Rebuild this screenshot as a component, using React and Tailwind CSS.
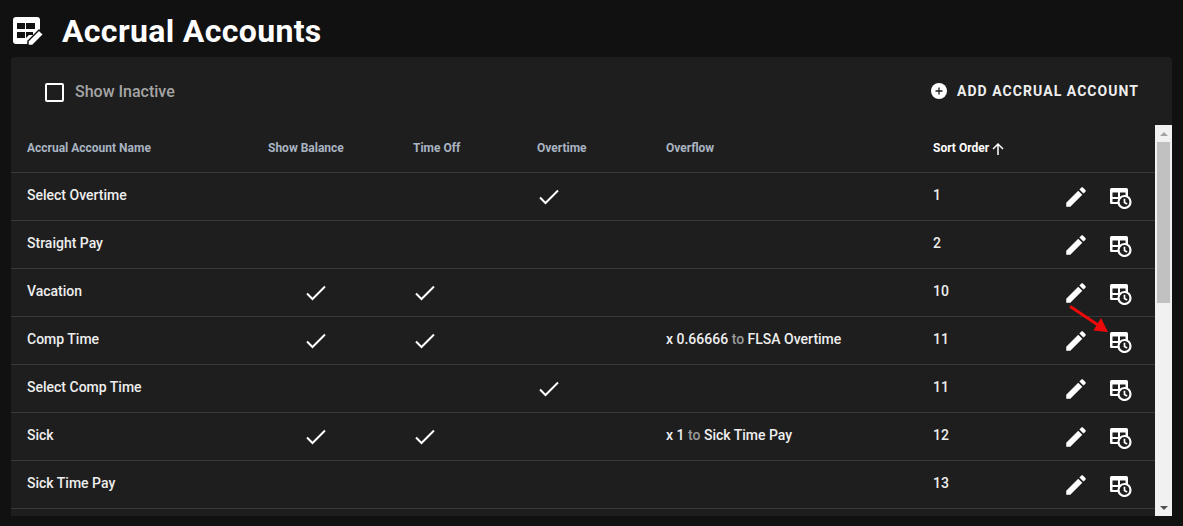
const ROWS = [
  { name: 'Select Overtime', overtime: true, sort: 1 },
  { name: 'Straight Pay', sort: 2 },
  { name: 'Vacation', balance: true, timeOff: true, sort: 10 },
  { name: 'Comp Time', balance: true, timeOff: true, rate: 'x 0.66666', target: 'FLSA Overtime', sort: 11 },
  { name: 'Select Comp Time', overtime: true, sort: 11 },
  { name: 'Sick', balance: true, timeOff: true, rate: 'x 1', target: 'Sick Time Pay', sort: 12 },
  { name: 'Sick Time Pay', sort: 13 },
];

const GRID = 'grid grid-cols-[257px_145px_124px_129px_267px_120px_1fr] items-center';

function Check() {
  return (
    <svg width="20" height="16" viewBox="0 0 20 16" fill="none" stroke="white" strokeWidth="2">
      <path d="M1 8.5l5.5 5.5L19 1.5" />
    </svg>
  );
}

function EditIcon() {
  return (
    <svg width="26" height="26" viewBox="0 0 24 24" fill="white">
      <path d="M3 17.25V21h3.75L17.81 9.94l-3.75-3.75L3 17.25zM20.71 7.04c.39-.39.39-1.02 0-1.41l-2.34-2.34c-.39-.39-1.02-.39-1.41 0l-1.83 1.83 3.75 3.75 1.83-1.83z" />
    </svg>
  );
}

function TableClock() {
  return (
    <svg width="22" height="21" viewBox="0 0 22 21">
      <rect x="0" y="0" width="18" height="16" rx="1.5" fill="white" />
      <path d="M2.5 4.5h5.5v4.5H2.5zM10 4.5h5.5v4.5H10zM2.5 11h5.5v3H2.5z" fill="#1e1e1e" />
      <circle cx="14.5" cy="14" r="6" fill="#1e1e1e" stroke="white" strokeWidth="2.2" />
      <path d="M14.5 10.8v3.6l2.6 1.5" fill="none" stroke="white" strokeWidth="1.7" />
    </svg>
  );
}

function TitleIcon() {
  return (
    <svg width="31" height="29" viewBox="0 0 31 29">
      <path d="M3 0h21a3 3 0 0 1 3 3v13L14 27H3a3 3 0 0 1-3-3V3a3 3 0 0 1 3-3z" fill="white" />
      <path d="M4 6h8v6H4zM13 6h9v6h-9zM4 15h8v6H4zM13 15h7v3h-4l-3 3z" fill="#111111" />
      <path d="M15 28.5v-4.5L26 13l4.5 4.5-11 11z" fill="white" stroke="#111111" strokeWidth="1.5" />
    </svg>
  );
}

export default function App() {
  return (
    <div className="h-[526px] w-[1183px] overflow-hidden bg-[#111111] font-['Roboto',sans-serif] text-white relative">
      {/* titre */}
      <div className="flex h-[57px] items-center pl-[13px] pt-[5px]">
        <TitleIcon />
        <h1 className="ml-[18px] text-[32px] font-bold leading-none tracking-[0.35px] pb-[1px]">Accrual Accounts</h1>
      </div>

      {/* carte */}
      <div className="ml-[11px] w-[1161px] h-[459px] rounded-t-[4px] bg-[#1e1e1e] flex flex-col">
        <div className="flex h-[68px] items-center justify-between pl-[34px] pr-[33px]">
          <label className="flex items-center">
            <span className="mt-[3px] h-[19px] w-[19px] rounded-[2px] border-2 border-white" />
            <span className="ml-[11px] pt-[1px] text-base font-medium text-[#a5a5a5]">Show Inactive</span>
          </label>
          <button className="flex items-center">
            <svg width="16" height="16" viewBox="0 0 16 16">
              <circle cx="8" cy="8" r="8" fill="white" />
              <path d="M4.5 8h7M8 4.5v7" stroke="#1e1e1e" strokeWidth="1.3" />
            </svg>
            <span className="ml-[10px] text-[14px] font-bold tracking-[1.05px] text-[#eeeeee]">ADD ACCRUAL ACCOUNT</span>
          </button>
        </div>

        <div className="flex flex-1 min-h-0">
          <div className="flex-1 overflow-hidden">
            <div className={`${GRID} h-[48px] border-b border-[#383838] text-xs font-bold text-[#a9b4c2]`}>
              <div className="pl-4 pb-[2px]">Accrual Account Name</div>
              <div className="pb-[2px]">Show Balance</div>
              <div className="pb-[2px]">Time Off</div>
              <div className="pb-[2px]">Overtime</div>
              <div className="pb-[2px]">Overflow</div>
              <div className="flex items-center text-white pb-[2px]">
                Sort Order
                <svg className="ml-[2px] mt-[2px]" width="14" height="14" viewBox="0 0 14 14" fill="none" stroke="white" strokeWidth="1.5">
                  <path d="M7 13V2M2 7l5-5 5 5" />
                </svg>
              </div>
              <div />
            </div>

            {ROWS.map(row => (
              <div key={row.name} className={`${GRID} h-[48px] border-b border-[#383838] text-[14px] font-medium text-[#eeeeee]`}>
                <div className="pl-4 pb-[2px]">{row.name}</div>
                <div className="pl-[38px]">{row.balance && <Check />}</div>
                <div className="pl-[2px]">{row.timeOff && <Check />}</div>
                <div className="pl-[2px]">{row.overtime && <Check />}</div>
                <div className="pb-[2px]">
                  {row.rate && (
                    <>
                      {row.rate} <span className="text-[#9a9a9a]">to</span> {row.target}
                    </>
                  )}
                </div>
                <div className="pb-[2px]">{row.sort}</div>
                <div className="flex items-center pl-[10px]">
                  <EditIcon />
                  <span className="ml-[21px] mt-[4px] flex"><TableClock /></span>
                </div>
              </div>
            ))}
          </div>

          {/* barre de défilement */}
          <div className="flex w-[17px] flex-col bg-[#f1f1f1]">
            <div className="flex h-[17px] items-center justify-center">
              <span className="h-0 w-0 border-x-[4px] border-b-[4px] border-x-transparent border-b-[#a3a3a3]" />
            </div>
            <div className="mx-[2px] h-[161px] bg-[#c1c1c1]" />
            <div className="flex-1" />
            <div className="flex h-[17px] items-center justify-center">
              <span className="h-0 w-0 border-x-[4px] border-t-[4px] border-x-transparent border-t-[#505050]" />
            </div>
          </div>
        </div>
      </div>

      {/* flèche rouge d'annotation */}
      <svg className="absolute left-[1068px] top-[304px]" width="44" height="32" viewBox="0 0 44 32" fill="none">
        <path d="M3 3l30 20" stroke="#ee0a0a" strokeWidth="3" strokeLinecap="round" />
        <path d="M40 28L25.5 26.5L33 14z" fill="#ee0a0a" />
      </svg>
    </div>
  );
}
